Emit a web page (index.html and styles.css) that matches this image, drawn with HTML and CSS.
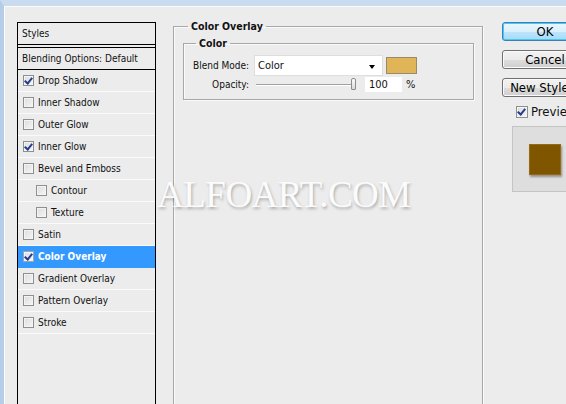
FILE: index.html
```html
<!DOCTYPE html>
<html>
<head>
<meta charset="utf-8">
<link rel="stylesheet" href="styles.css">
</head>
<body>
<div class="window">
  <div class="styles-list">
    <div class="row head">Styles</div>
    <div class="row blend">Blending Options: Default</div>
    <div class="row"><span class="cb on"></span>Drop Shadow</div>
    <div class="row"><span class="cb"></span>Inner Shadow</div>
    <div class="row"><span class="cb"></span>Outer Glow</div>
    <div class="row"><span class="cb on"></span>Inner Glow</div>
    <div class="row"><span class="cb"></span>Bevel and Emboss</div>
    <div class="row sub"><span class="cb"></span>Contour</div>
    <div class="row sub"><span class="cb"></span>Texture</div>
    <div class="row"><span class="cb"></span>Satin</div>
    <div class="row selected"><span class="cb on"></span>Color Overlay</div>
    <div class="row"><span class="cb"></span>Gradient Overlay</div>
    <div class="row"><span class="cb"></span>Pattern Overlay</div>
    <div class="row"><span class="cb"></span>Stroke</div>
  </div>

  <fieldset class="overlay">
    <legend>Color Overlay</legend>
    <fieldset class="color">
      <legend>Color</legend>
      <div class="field">
        <span class="label">Blend Mode:</span>
        <div class="select">Color<span class="arrow"></span></div>
        <span class="swatch"></span>
      </div>
      <div class="field opacity">
        <span class="label">Opacity:</span>
        <div class="slider"><span class="track"></span><span class="thumb"></span></div>
        <span class="num">100</span>
        <span class="pct">%</span>
      </div>
    </fieldset>
  </fieldset>

  <div class="actions">
    <div class="btn ok">OK</div>
    <div class="btn">Cancel</div>
    <div class="btn">New Style...</div>
    <div class="preview-check"><span class="cb on big"></span>Preview</div>
    <div class="preview-box"><span class="preview-square"></span></div>
  </div>

  <div class="watermark">ALFOART.COM</div>
</div>
</body>
</html>
```

FILE: styles.css
```css
html, body {
  margin: 0;
  padding: 0;
  width: 566px;
  height: 404px;
  overflow: hidden;
  background: #ececec;
}

.window {
  position: relative;
  display: flex;
  align-items: flex-start;
  height: 404px;
  overflow: hidden;
  box-sizing: border-box;
  background: #ececec;
  border-top: 6px solid #c9dbee;
  border-left: 4px solid #b6cde7;
  box-shadow: inset 1px 1px 0 #fbfbfb;
  font-family: "DejaVu Sans Condensed", "DejaVu Sans", sans-serif;
  font-size: 10px;
  color: #111;
}

/* ---------- styles list ---------- */
.styles-list {
  flex: none;
  width: 139px;
  height: 420px;
  margin: 16px 0 0 13px;
  box-sizing: border-box;
  border: 1px solid #000;
  border-bottom: none;
}

.row {
  display: flex;
  align-items: center;
  height: 21px;
  padding-left: 5px;
  border-bottom: 1px solid #fafafa;
  white-space: nowrap;
}

.row.head {
  padding-left: 4px;
  border-bottom: 1px solid #000;
}

.row.blend {
  padding-left: 4px;
  margin-top: 2px;
  border-top: 1px solid #000;
  border-bottom: 1px solid #000;
}

.row.sub {
  padding-left: 18px;
}

.row.selected {
  background: #3399ff;
  color: #fff;
  font-weight: bold;
  border-bottom-color: #3399ff;
}

.cb {
  flex: none;
  position: relative;
  width: 11px;
  height: 11px;
  margin-right: 4px;
  box-sizing: border-box;
  border: 1px solid #8e8f8f;
  background: linear-gradient(135deg, #dcdcdc, #f6f6f6);
  box-shadow: inset 0 0 0 1px #f4f4f4;
}

.cb.on::after {
  content: "";
  position: absolute;
  left: 2px;
  top: 0px;
  width: 3px;
  height: 6px;
  border-right: 2px solid #253c8e;
  border-bottom: 2px solid #253c8e;
  transform: rotate(40deg);
}

.selected .cb {
  border-color: #9aa6b4;
}

/* ---------- fieldsets ---------- */
fieldset {
  margin: 0;
  border: 1px solid #a8a8a8;
  box-shadow: 1px 1px 0 #fafafa, inset 1px 1px 0 #fafafa;
}

legend {
  font-weight: bold;
  line-height: 13px;
  padding: 0 3px;
  color: #111;
}

.overlay {
  flex: none;
  width: 310px;
  height: 420px;
  box-sizing: border-box;
  margin: 14px 0 0 17px;
  padding: 4px 8px 0 9px;
}

.overlay > legend {
  margin-left: 5px;
  font-size: 10.5px;
}

.color {
  padding: 5px 0 7px 8px;
}

.color > legend {
  margin-left: 4px;
  font-size: 10.5px;
}

.field {
  display: flex;
  align-items: center;
  height: 21px;
}

.field.opacity {
  margin-top: 1px;
  height: 15px;
}

.label {
  width: 57px;
  text-align: right;
  white-space: nowrap;
}

.select {
  position: relative;
  width: 129px;
  height: 21px;
  margin-left: 5px;
  box-sizing: border-box;
  background: #fff;
  border: 1px solid #dedede;
  padding-left: 3px;
  display: flex;
  align-items: center;
  font-size: 11px;
}

.arrow {
  position: absolute;
  right: 7px;
  top: 9px;
  border-left: 3.5px solid transparent;
  border-right: 3.5px solid transparent;
  border-top: 4px solid #000;
}

.swatch {
  width: 31px;
  height: 17px;
  margin-left: 3px;
  box-sizing: border-box;
  background: #e0b558;
  border: 1px solid #9a8a6a;
}

.slider {
  position: relative;
  width: 103px;
  height: 15px;
  margin-left: 7px;
}

.track {
  position: absolute;
  left: 0;
  right: 5px;
  top: 7px;
  height: 1px;
  background: #a0a0a0;
  border-bottom: 1px solid #fff;
}

.thumb {
  position: absolute;
  left: 95px;
  top: 1px;
  width: 5px;
  height: 12px;
  box-sizing: border-box;
  border: 1px solid #8c8c8c;
  border-radius: 2px 2px 1px 1px;
  background: linear-gradient(#fdfdfd, #d8d8d8);
}

.num {
  width: 37px;
  height: 15px;
  margin-left: 6px;
  box-sizing: border-box;
  background: #fff;
  padding: 1px 0 0 4px;
  font-size: 11px;
  line-height: 13px;
}

.pct {
  margin-left: 4px;
  font-size: 11px;
}

/* ---------- buttons ---------- */
.actions {
  flex: none;
  width: 90px;
  margin: 16px 0 0 19px;
  display: flex;
  flex-direction: column;
  font-size: 13px;
}

.btn {
  width: 86px;
  height: 19px;
  box-sizing: border-box;
  margin-bottom: 9px;
  border: 1px solid #707070;
  border-radius: 3px;
  background: linear-gradient(#f2f2f2 0%, #ebebeb 50%, #dddddd 51%, #cfcfcf 100%);
  box-shadow: inset 0 0 0 1px #fbfbfb;
  display: flex;
  align-items: center;
  justify-content: center;
  white-space: nowrap;
  line-height: 1;
  color: #000;
}

.btn.ok {
  border-color: #3c7fb1;
  background: linear-gradient(#eaf6fd 0%, #d9f0fc 50%, #bee6fd 51%, #a7d9f5 100%);
  box-shadow: inset 0 0 0 1px #48c8f5;
}

.preview-check {
  display: flex;
  align-items: center;
  height: 13px;
  margin: -1px 0 0 14px;
  white-space: nowrap;
}

.cb.big {
  width: 12px;
  height: 12px;
  margin-right: 3px;
}

.preview-box {
  margin: 8px 0 0 10px;
  width: 70px;
  height: 66px;
  box-sizing: border-box;
  background: #dedede;
  border: 1px solid #c4c4c4;
  padding: 17px 0 0 16px;
}

.preview-square {
  display: block;
  width: 32px;
  height: 31px;
  box-sizing: border-box;
  background: #7f5500;
  border: 1px solid #9a6a10;
  box-shadow: 1px 2px 2px rgba(0, 0, 0, 0.35);
}

/* ---------- watermark ---------- */
.watermark {
  position: absolute;
  left: 153px;
  top: 167px;
  font-family: "Liberation Serif", serif;
  font-size: 37px;
  letter-spacing: -0.5px;
  color: #fbfbfb;
  text-shadow: 1px 2px 3px rgba(0, 0, 0, 0.28);
  white-space: nowrap;
}
```
